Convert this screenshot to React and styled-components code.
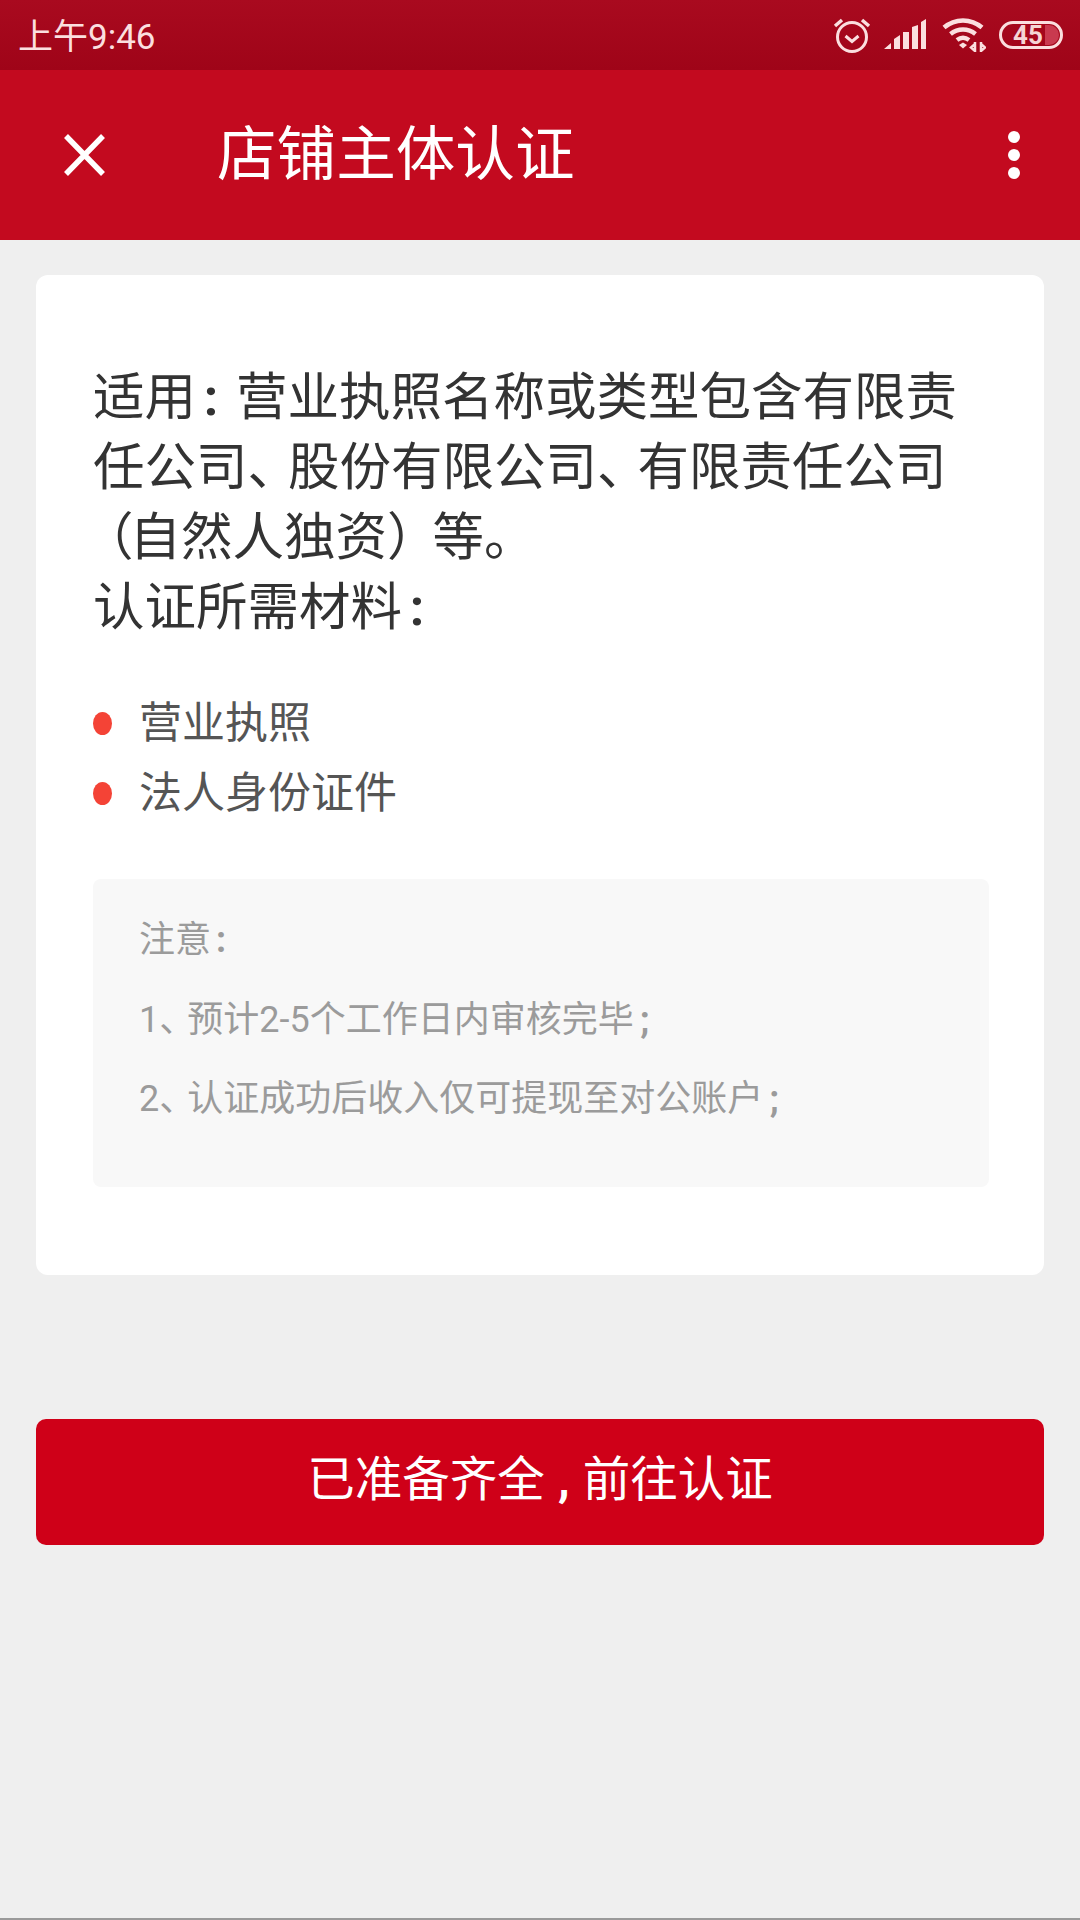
import React from 'react';
import styled, { createGlobalStyle } from 'styled-components';

const Global = createGlobalStyle`
  html, body {
    margin: 0;
    padding: 0;
    background: #efefef;
  }
  * { box-sizing: border-box; }
`;

const Page = styled.div`
  width: 1080px;
  height: 1920px;
  background: #efefef;
  border-bottom: 2px solid #9a9a9a;
  font-family: "Roboto", "Noto Sans CJK SC", sans-serif;
  overflow: hidden;
`;

const StatusBar = styled.div`
  height: 70px;
  padding: 0 17px 0 18px;
  display: flex;
  align-items: center;
  justify-content: space-between;
  background: linear-gradient(180deg, #a90a1f 0%, #9f0418 100%);
  color: #fbdfdf;
`;

const Clock = styled.div`
  font-size: 35px;
  line-height: 1;
  margin-top: 4px;
`;

const StatusIcons = styled.div`
  display: flex;
  align-items: center;
`;

const Battery = styled.div`
  position: relative;
  width: 64px;
  height: 28px;
  margin-left: 13px;
  border: 3px solid #fbdfdf;
  border-radius: 14px;
  display: flex;
  align-items: center;
  justify-content: center;
  font: 700 26px/1 "Roboto", sans-serif;
  color: #f5d5d5;
  overflow: hidden;

  &::after {
    content: "";
    position: absolute;
    top: 1px;
    bottom: 1px;
    right: 1px;
    width: 14px;
    border-radius: 0 10px 10px 0;
    background: #c93a4f;
  }
`;

const BatteryLevel = styled.span`
  position: relative;
  z-index: 1;
  margin-right: 6px;
`;

const Header = styled.div`
  height: 170px;
  padding: 0 60px 0 64px;
  display: flex;
  align-items: center;
  background: #c30a1f;
  color: #fff;
`;

const Title = styled.div`
  flex: 1;
  margin: 1px 0 0 112px;
  font-size: 59.6px;
  line-height: 1;
`;

const Card = styled.div`
  margin: 35px 36px 0;
  height: 1000px;
  padding: 83px 56px 0 57px;
  background: #fff;
  border-radius: 12px;
`;

const Intro = styled.div`
  font-family: "Noto Sans CJK SC", sans-serif;
  font-size: 51.5px;
  line-height: 70px;
  color: #333;
  white-space: nowrap;
`;

// half width mark centred in a fixed slot, the way the reference sets : and ,
const Mark = styled.span`
  display: inline-block;
  width: ${p => p.$w}px;
  padding-right: ${p => p.$shift || 0}px;
  text-align: center;
  font-family: "Roboto", sans-serif;
  font-weight: 700;
  line-height: 1;
`;

const Paren = styled.span`
  font-family: "Noto Sans CJK TC", sans-serif;
  line-height: 1;
  margin-left: ${p => p.$left || 0}px;
  letter-spacing: ${p => p.$tight}px;
`;

const Pause = styled.span`
  letter-spacing: ${p => p.$tight}px;
`;

const List = styled.ul`
  list-style: none;
  margin: 46px 0 0;
  padding: 0;
`;

const Item = styled.li`
  display: flex;
  align-items: center;
  height: 70px;
  font-size: 43px;
  color: #555;
`;

const Dot = styled.span`
  width: 19px;
  height: 23px;
  margin-right: 27px;
  margin-top: 8px;
  border-radius: 50%;
  background: #f44336;
`;

const Note = styled.div`
  margin-top: 55px;
  width: 896px;
  height: 308px;
  padding: 26px 0 0 46px;
  background: #f8f8f8;
  border-radius: 8px;
  font-size: 36px;
  color: #9b9b9b;
`;

const NoteLine = styled.div`
  height: 79.5px;
  line-height: 70px;
  white-space: nowrap;
`;

const Submit = styled.button`
  display: block;
  width: 1008px;
  height: 126px;
  margin: 144px 36px 0;
  padding: 0 0 2px;
  border: 0;
  border-radius: 10px;
  background: #cf0018;
  color: #fff;
  font-family: inherit;
  font-size: 47.5px;
  line-height: 1;
`;

const AlarmIcon = () => (
  <svg width="38" height="38" viewBox="0 0 38 38" fill="none" stroke="#fbdfdf" strokeWidth="3">
    <circle cx="19" cy="21" r="14.5" />
    <path d="M12.5 20l6.5 5.5 6.5-5.5" strokeWidth="3" />
    <path d="M2 10l7-6M36 10l-7-6" strokeWidth="3.5" />
  </svg>
);

const SignalIcon = () => (
  <svg width="42" height="32" viewBox="0 0 42 32" fill="#fbdfdf" style={{ marginLeft: 13 }}>
    <path d="M0 30l7-6v6zM10 20l6-4v14h-6zM19 13h6v17h-6zM28 8l6-2v24h-6zM37 3l5-3v30h-5z" />
  </svg>
);

const WifiIcon = () => (
  <svg width="44" height="36" viewBox="0 0 44 36" fill="none" stroke="#fbdfdf" style={{ marginLeft: 16 }}>
    <path d="M2 10.5C13 1 29 1 40 10.5" strokeWidth="4.5" />
    <path d="M8.5 17C16 11 26 11 33.5 17" strokeWidth="4.5" />
    <path d="M15 23c4-3 8-3 12 0" strokeWidth="4.5" />
    <path d="M17 28l4-2.5 4 2.5-4 3.5z" fill="#fbdfdf" stroke="none" />
    <path d="M33 25v10M39 25v10M33 27l-4 3.5 4 3.5M39 27l4 3.5-4 3.5" strokeWidth="2.5" />
  </svg>
);

const CloseIcon = () => (
  <svg width="41" height="44" viewBox="0 0 41 44" fill="none" stroke="#fff" strokeWidth="5.5">
    <path d="M2 3l37 38M39 3L2 41" />
  </svg>
);

const MoreIcon = () => (
  <svg width="12" height="48" viewBox="0 0 12 48" fill="#fff">
    <circle cx="6" cy="6" r="6" />
    <circle cx="6" cy="24" r="6" />
    <circle cx="6" cy="42" r="6" />
  </svg>
);

export default function App() {
  return (
    <Page>
      <Global />
      <StatusBar>
        <Clock>上午9:46</Clock>
        <StatusIcons>
          <AlarmIcon />
          <SignalIcon />
          <WifiIcon />
          <Battery><BatteryLevel>45</BatteryLevel></Battery>
        </StatusIcons>
      </StatusBar>
      <Header>
        <CloseIcon />
        <Title>店铺主体认证</Title>
        <MoreIcon />
      </Header>
      <Card>
        <Intro>
          适用<Mark $w={40} $shift={10}>:</Mark>营业执照名称或类型包含有限责<br />
          任公司<Pause $tight={-11}>、</Pause>股份有限公司<Pause $tight={-11}>、</Pause>有限责任公司<br />
          <Paren $left={-11} $tight={-4}>（</Paren>自然人独资<Paren $tight={-6}>）</Paren>等。<br />
          认证所需材料<Mark $w={40} $shift={10}>:</Mark>
        </Intro>
        <List>
          <Item><Dot />营业执照</Item>
          <Item><Dot />法人身份证件</Item>
        </List>
        <Note>
          <NoteLine>注意<Mark $w={20}>:</Mark></NoteLine>
          <NoteLine>1<Pause $tight={-8}>、</Pause>预计2-5个工作日内审核完毕<Mark $w={22}>;</Mark></NoteLine>
          <NoteLine>2<Pause $tight={-8}>、</Pause>认证成功后收入仅可提现至对公账户<Mark $w={22}>;</Mark></NoteLine>
        </Note>
      </Card>
      <Submit>已准备齐全<Mark $w={38}>,</Mark>前往认证</Submit>
    </Page>
  );
}
